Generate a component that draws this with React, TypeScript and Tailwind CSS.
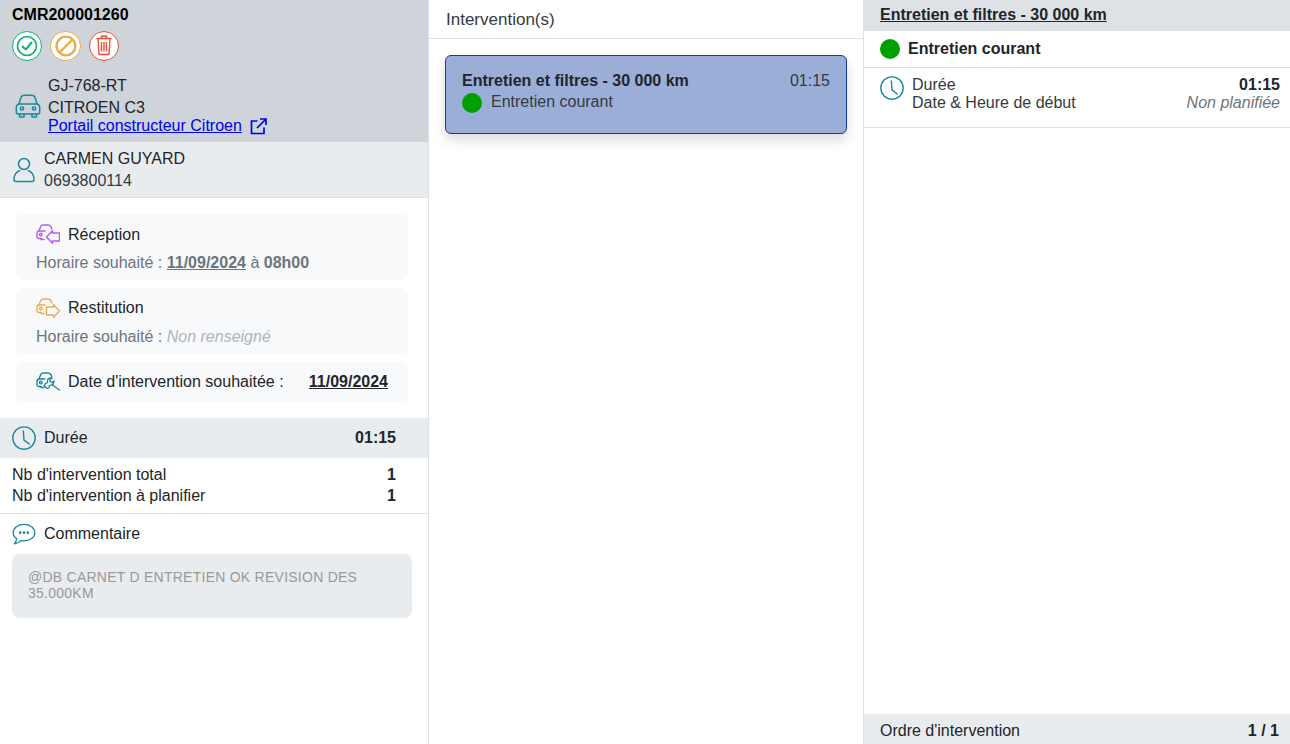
import React from "react";

const T = "#17899c";

function CarHead({ color }: { color: string }) {
  return (
    <g fill="none" stroke={color} strokeWidth="1.4" strokeLinecap="round" strokeLinejoin="round">
      <path d="M3 7 4.6 2.8Q5.2 1 7.5 1H11.5Q14 1 15 2.8L15.8 5" />
      <path d="M8 15.5H5V14.5H3Q1 14.5 1 12.5V9.5Q1 7 3.5 7H9" />
      <circle cx="4.8" cy="10.6" r="1.3" />
    </g>
  );
}

function Reception() {
  return (
    <svg className="-mt-[2px] shrink-0" width="24" height="20" viewBox="0 0 24 20">
      <CarHead color="#b55cf0" />
      <path d="M10.5 13 16.5 6.7V9H23.5V17H16.5V19.3Z" fill="none" stroke="#b55cf0" strokeWidth="1.4" strokeLinejoin="round" />
    </svg>
  );
}

function Restitution() {
  return (
    <svg className="shrink-0" width="24" height="20" viewBox="0 0 24 20">
      <CarHead color="#e8ad4f" />
      <path d="M23.5 13 17.5 6.7V9H10.5V17H17.5V19.3Z" fill="none" stroke="#e8ad4f" strokeWidth="1.4" strokeLinejoin="round" />
    </svg>
  );
}

function Wrench() {
  return (
    <svg className="shrink-0" width="24" height="20" viewBox="0 0 24 20">
      <CarHead color={T} />
      <path
        d="M8 13.5 10.5 16Q12 17 13 15.5L13.5 13.5 15 13Q18 12.5 18 9L15.8 10.5 14 9.5 14 7.5 16 6Q12 5.5 11.5 8.5L11.5 10.5 9 12ZM16.5 13 23.5 18"
        fill="none"
        stroke={T}
        strokeWidth="1.3"
        strokeLinejoin="round"
        strokeLinecap="round"
      />
    </svg>
  );
}

function Clock() {
  return (
    <svg className="shrink-0" width="24" height="24" viewBox="0 0 26 26" fill="none" stroke={T} strokeWidth="1.5" strokeLinecap="round">
      <circle cx="13" cy="13" r="12.1" />
      <path d="M12.3 5.4 13 15.2 18.8 19.5" />
    </svg>
  );
}

function Dot({ size = 20 }: { size?: number }) {
  return <span className="inline-block shrink-0 rounded-full bg-[#00a000]" style={{ width: size, height: size }} />;
}

export default function App() {
  return (
    <div className="flex h-[744px] w-[1290px] overflow-hidden bg-white font-['Liberation_Sans',Arial,sans-serif] text-base text-[#212529]">
      <aside className="flex w-[429px] shrink-0 flex-col border-r border-[#dee2e6]">
        <div className="h-[142px] bg-[#ced4da] pl-3">
          <div className="h-[31px] pt-[5px] text-base leading-5 font-bold text-black">CMR200001260</div>
          <div className="flex h-[31px] gap-2">
            <span className="flex h-[30px] w-[30px] items-center justify-center rounded-full border-[1.5px] border-[#12b071] bg-white">
              <svg width="22" height="22" viewBox="0 0 22 22" fill="none" stroke="#12b071" strokeWidth="1.7" strokeLinecap="round" strokeLinejoin="round">
                <circle cx="11" cy="11" r="9.5" />
                <path d="M6.5 11.5 9.8 14.5 15.5 7.5" strokeWidth="2" />
              </svg>
            </span>
            <span className="flex h-[30px] w-[31px] items-center justify-center rounded-full border-[1.5px] border-[#e8ad4f] bg-white">
              <svg width="22" height="22" viewBox="0 0 22 22" fill="none" stroke="#e8ad4f" strokeWidth="2.4">
                <circle cx="11" cy="11" r="9.4" />
                <path d="M4.5 17.5 17.5 4.5" />
              </svg>
            </span>
            <span className="flex h-[30px] w-[30px] items-center justify-center rounded-full border-[1.5px] border-[#e8503a] bg-white">
              <svg width="18" height="22" viewBox="0 0 18 22" fill="none" stroke="#e8503a" strokeWidth="1.4" strokeLinejoin="round">
                <path d="M1.5 3.5H16.5M6.5 3.5V1H11.5V3.5M3 3.5 4 19.5H14L15 3.5" />
                <path d="M6.5 7V16.5M9 7V16.5M11.5 7V16.5" />
              </svg>
            </span>
          </div>
          <div className="mt-[13px] flex items-center">
            <svg className="mt-[2px] ml-[3px] shrink-0" width="26" height="26" viewBox="0 0 26 26" fill="none" stroke={T} strokeWidth="1.5" strokeLinejoin="round" strokeLinecap="round">
              <path d="M4 11 6 4.5Q6.8 2.2 9.5 2.2H16.5Q19.2 2.2 20 4.5L22 11" />
              <path d="M4 11Q1.3 11.6 1.3 14.5V19.5Q1.3 21 3 21H23Q24.7 21 24.7 19.5V14.5Q24.7 11.6 22 11Z" />
              <path d="M4.5 21V24H9V21M17 21V24H21.5V21" />
              <circle cx="7" cy="15.5" r="1.6" />
              <circle cx="19" cy="15.5" r="1.6" />
            </svg>
            <div className="ml-[7px]">
              <div className="leading-[22px]">GJ-768-RT</div>
              <div className="leading-[22px]">CITROEN C3</div>
              <a className="-mt-[2px] flex items-center leading-[18px] text-[#0000ee]">
                <span className="underline">Portail constructeur Citroen</span>
                <svg className="ml-[8px]" width="17" height="17" viewBox="0 0 17 17" fill="none" stroke="#0000ee" strokeWidth="1.7">
                  <path d="M7.5 3H1.5V15.5H14V9.5" />
                  <path d="M7 10 15.5 1.5M10 1H16V7" />
                </svg>
              </a>
            </div>
          </div>
        </div>

        <div className="flex h-[56px] items-center border-b border-[#dee2e6] bg-[#e9ecef] pl-[13px]">
          <svg className="mt-[1px] shrink-0" width="22" height="26" viewBox="0 0 22 26" fill="none" stroke={T} strokeWidth="1.5" strokeLinejoin="round">
            <circle cx="11" cy="7" r="5.5" />
            <path d="M7 13.5Q1 15.5 1 22.5 1 24.5 3 24.5H19Q21 24.5 21 22.5 21 15.5 15 13.5" />
          </svg>
          <div className="ml-[9px]">
            <div className="leading-[22px]">CARMEN GUYARD</div>
            <div className="leading-[22px] text-[#343a40]">0693800114</div>
          </div>
        </div>

        <div className="flex flex-col gap-2 pt-4 pr-5 pb-4 pl-4">
          <div className="h-[66px] rounded-lg bg-[#f8f9fa] px-5 pt-[10px]">
            <div className="flex h-[22px] items-center gap-2">
              <Reception />
              <span className="leading-[22px]">Réception</span>
            </div>
            <div className="mt-[6px] leading-[22px] text-[#6c757d]">
              Horaire souhaité : <b className="underline">11/09/2024</b> à <b>08h00</b>
            </div>
          </div>
          <div className="h-[66px] rounded-lg bg-[#f8f9fa] px-5 pt-[9px]">
            <div className="flex h-[22px] items-center gap-2">
              <Restitution />
              <span className="leading-[22px]">Restitution</span>
            </div>
            <div className="mt-[7px] leading-[22px] text-[#6c757d]">
              Horaire souhaité : <i className="text-[#adb5bd]">Non renseigné</i>
            </div>
          </div>
          <div className="flex h-[40px] items-center justify-between rounded-lg bg-[#f8f9fa] px-5">
            <div className="flex items-center gap-2">
              <Wrench />
              <span>Date d'intervention souhaitée :</span>
            </div>
            <b className="underline">11/09/2024</b>
          </div>
        </div>

        <div className="flex h-[40px] items-center justify-between bg-[#e9ecef] pr-8 pl-3">
          <div className="flex items-center gap-2">
            <Clock />
            <span>Durée</span>
          </div>
          <b>01:15</b>
        </div>

        <div className="flex h-[56px] flex-col justify-center border-b border-[#dee2e6] pr-8 pb-[1px] pl-3">
          <div className="flex justify-between leading-[21px]">
            <span>Nb d'intervention total</span>
            <b>1</b>
          </div>
          <div className="flex justify-between leading-[21px]">
            <span>Nb d'intervention à planifier</span>
            <b>1</b>
          </div>
        </div>

        <div className="flex h-[40px] items-center gap-2 pl-3">
          <svg className="shrink-0" width="24" height="22" viewBox="0 0 26 24" fill="none" stroke={T} strokeWidth="1.4" strokeLinejoin="round">
            <path d="M13 1.5C6.5 1.5 1.2 5.3 1.2 10.5 1.2 13.2 2.7 15.5 5 17 4.8 19 4 21 2.5 22.8 5.5 22.5 8 21 9.5 19.2 10.8 19.4 11.8 19.5 13 19.5 19.5 19.5 24.8 15.7 24.8 10.5 24.8 5.3 19.5 1.5 13 1.5Z" />
            <circle cx="8.8" cy="10.5" r=".7" fill={T} />
            <circle cx="13" cy="10.5" r=".7" fill={T} />
            <circle cx="17.2" cy="10.5" r=".7" fill={T} />
          </svg>
          <span>Commentaire</span>
        </div>

        <div className="mr-4 ml-3 h-[64px] rounded-lg bg-[#e9ecef] px-4 pt-[15px] text-sm leading-4 tracking-[0.25px] text-[#999999]">
          @DB CARNET D ENTRETIEN OK REVISION DES 35.000KM
        </div>
      </aside>

      <main className="w-[435px] shrink-0 border-r border-[#dee2e6]">
        <div className="flex h-[39px] items-center border-b border-[#dee2e6] pt-[2px] pl-[17px] text-[17px] text-[#343a40]">
          Intervention(s)
        </div>
        <div className="px-4 pt-4">
          <div className="flex h-[79px] justify-between rounded-md border border-[#0d3d9e] bg-[#9aaed8] pt-[15px] pr-4 pl-4 shadow-[0_6px_12px_rgba(0,0,0,0.15)]">
            <div>
              <div className="leading-5 font-bold">Entretien et filtres - 30 000 km</div>
              <div className="mt-[1px] flex items-center gap-[9px] text-[#343a40]">
                <Dot />
                <span className="-mt-[2px]">Entretien courant</span>
              </div>
            </div>
            <span className="leading-5 text-[#343a40]">01:15</span>
          </div>
        </div>
      </main>

      <section className="flex flex-1 flex-col">
        <div className="flex h-[31px] items-center bg-[#dee2e6] pb-[2px] pl-4 font-bold underline">Entretien et filtres - 30 000 km</div>
        <div className="flex h-[37px] items-center gap-2 border-b border-[#dee2e6] pl-4 font-bold">
          <Dot />
          Entretien courant
        </div>
        <div className="flex h-[60px] border-b border-[#dee2e6] pt-[8px] pr-[10px] pl-4">
          <Clock />
          <div className="ml-[8px] flex-1 text-[#343a40]">
            <div className="flex justify-between leading-[18px]">
              <span>Durée</span>
              <b className="text-[#212529]">01:15</b>
            </div>
            <div className="flex justify-between leading-[18px]">
              <span>Date &amp; Heure de début</span>
              <i className="text-[#6c757d]">Non planifiée</i>
            </div>
          </div>
        </div>
        <div className="flex-1" />
        <div className="flex h-[30px] items-center justify-between bg-[#e9ecef] pt-[3px] pr-[11px] pl-4">
          <span>Ordre d'intervention</span>
          <b>1 / 1</b>
        </div>
      </section>
    </div>
  );
}
